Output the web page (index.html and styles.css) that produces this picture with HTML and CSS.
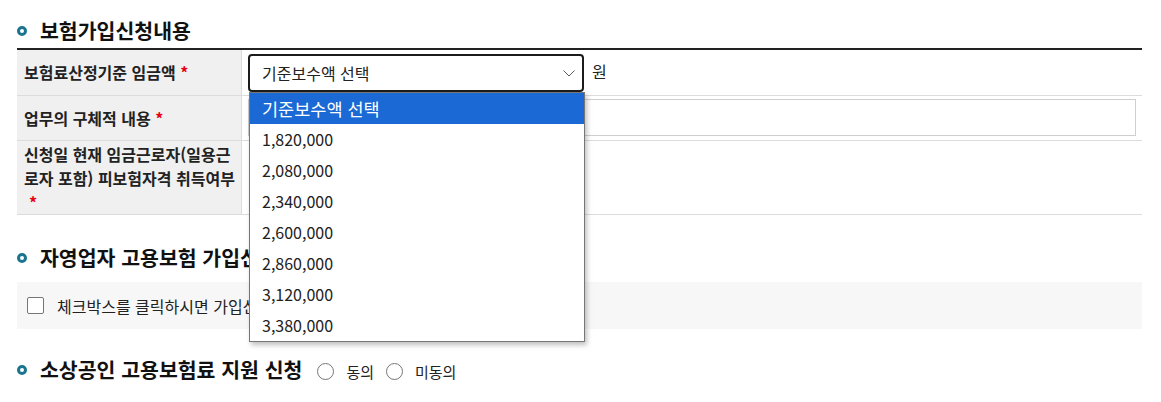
FILE: index.html
```html
<!DOCTYPE html>
<html lang="ko">
<head>
<meta charset="utf-8">
<title>보험가입신청내용</title>
<link rel="stylesheet" href="styles.css">
</head>
<body>
<div class="page">
  <section class="sec">
    <h2 class="sec-title"><span class="bullet"></span>보험가입신청내용</h2>
    <div class="form-table">
      <div class="row row-1">
        <div class="label">보험료산정기준 임금액 <span class="req">*</span></div>
        <div class="value">
          <div class="select-wrap">
            <div class="select">
              <span class="select-text">기준보수액 선택</span>
              <svg class="chev" width="12" height="7" viewBox="0 0 12 7"><path d="M0.5 0.5 L6 6 L11.5 0.5" fill="none" stroke="#5a5a5a" stroke-width="1"/></svg>
            </div>
            <ul class="dropdown">
              <li class="opt opt-placeholder active">기준보수액 선택</li>
              <li class="opt">1,820,000</li>
              <li class="opt">2,080,000</li>
              <li class="opt">2,340,000</li>
              <li class="opt">2,600,000</li>
              <li class="opt">2,860,000</li>
              <li class="opt">3,120,000</li>
              <li class="opt">3,380,000</li>
            </ul>
          </div>
          <span class="unit">원</span>
        </div>
      </div>
      <div class="row row-2">
        <div class="label">업무의 구체적 내용 <span class="req">*</span></div>
        <div class="value">
          <div class="text-input"></div>
        </div>
      </div>
      <div class="row row-3">
        <div class="label label-top">신청일 현재 임금근로자(일용근<br>로자 포함) 피보험자격 취득여부<br><span class="req req-line">*</span></div>
        <div class="value"></div>
      </div>
    </div>
  </section>

  <section class="sec sec-2">
    <h2 class="sec-title"><span class="bullet"></span>자영업자 고용보험 가입신청</h2>
    <div class="agree-box">
      <span class="checkbox"></span>
      <span class="agree-text">체크박스를 클릭하시면 가입신청에 동의합니다.</span>
    </div>
  </section>

  <section class="sec sec-3">
    <div class="title-line">
      <h2 class="sec-title"><span class="bullet"></span>소상공인 고용보험료 지원 신청</h2>
      <label class="radio-item"><span class="radio"></span><span class="radio-text">동의</span></label>
      <label class="radio-item"><span class="radio"></span><span class="radio-text">미동의</span></label>
    </div>
  </section>
</div>
</body>
</html>
```
FILE: styles.css
```css
* { box-sizing: border-box; }
html, body { margin: 0; padding: 0; background: #fff; }
body {
  font-family: "Noto Sans CJK KR", "Noto Sans", sans-serif;
  color: #222;
}
.page {
  padding: 16px 19px 0 17px;
  width: 1161px;
}
.sec-title {
  display: flex;
  align-items: center;
  margin: 0;
  height: 28px;
  line-height: 28px;
  font-size: 20.5px;
  font-weight: 700;
  color: #111;
  white-space: nowrap;
}
.bullet {
  width: 10px;
  height: 10px;
  border: 3px solid #1b7591;
  border-radius: 50%;
  margin: 1px 13px 0 0;
  flex: none;
}
.form-table {
  margin-top: 4px;
  border-top: 2px solid #222;
}
.row {
  display: grid;
  grid-template-columns: 225px 1fr;
  border-bottom: 1px solid #dcdcdc;
}
.row-1 { height: 46px; }
.row-2 { height: 45px; }
.row-3 { height: 74px; }
.label {
  background: #f0f0f0;
  border-right: 1px solid #dcdcdc;
  padding: 0 6px 0 7px;
  font-size: 16px;
  font-weight: 700;
  color: #222;
  line-height: 45px;
  white-space: nowrap;
}
.row-2 .label { line-height: 44px; }
.label-top {
  line-height: 24px;
  padding-top: 1px;
}
.req { color: #e60012; }
.req-line { padding-left: 5px; }
.value {
  display: flex;
  align-items: center;
  padding: 0 6px;
}
.select-wrap {
  position: relative;
}
.select {
  width: 336px;
  height: 38px;
  border: 2px solid #1c1c1c;
  border-radius: 4px;
  display: flex;
  align-items: center;
  padding: 0 7px 0 12px;
  font-size: 16px;
  color: #222;
}
.chev { margin-left: auto; margin-top: 1px; }
.unit {
  margin-left: 8px;
  font-size: 16px;
  color: #222;
  margin-top: -3px;
}
.dropdown {
  position: absolute;
  left: 1px;
  top: 100%;
  width: 336px;
  margin: 0;
  padding: 0;
  list-style: none;
  background: #fff;
  border: 1px solid #767676;
  box-shadow: 2px 3px 5px rgba(0,0,0,0.25);
  z-index: 10;
}
.opt {
  height: 31px;
  line-height: 31px;
  padding-left: 12px;
  font-size: 16px;
  color: #222;
}
.opt-placeholder { font-size: 17.5px; }
.opt.active {
  background: #1a69d4;
  color: #fff;
}
.text-input {
  width: 100%;
  height: 37px;
  border: 1px solid #cfcfcf;
  background: #fff;
  margin-top: -1px;
}
.sec-2 { margin-top: 28px; }
.agree-box {
  margin-top: 11px;
  height: 47px;
  background: #f7f7f7;
  display: flex;
  align-items: center;
  padding-left: 10px;
}
.checkbox {
  width: 17px;
  height: 17px;
  border: 1px solid #767676;
  border-radius: 2px;
  background: #fff;
  flex: none;
}
.agree-text {
  margin-left: 13px;
  font-size: 16px;
  color: #222;
  white-space: nowrap;
}
.sec-3 { margin-top: 26px; }
.title-line {
  display: flex;
  align-items: center;
}
.radio-item {
  display: flex;
  align-items: center;
  margin-left: 15px;
  margin-top: 5px;
}
.radio-item + .radio-item { margin-left: 12px; }
.radio {
  width: 17px;
  height: 17px;
  border: 1px solid #767676;
  border-radius: 50%;
  background: #fff;
  flex: none;
}
.radio-text {
  margin-left: 12px;
  font-size: 15px;
  color: #222;
}
```
